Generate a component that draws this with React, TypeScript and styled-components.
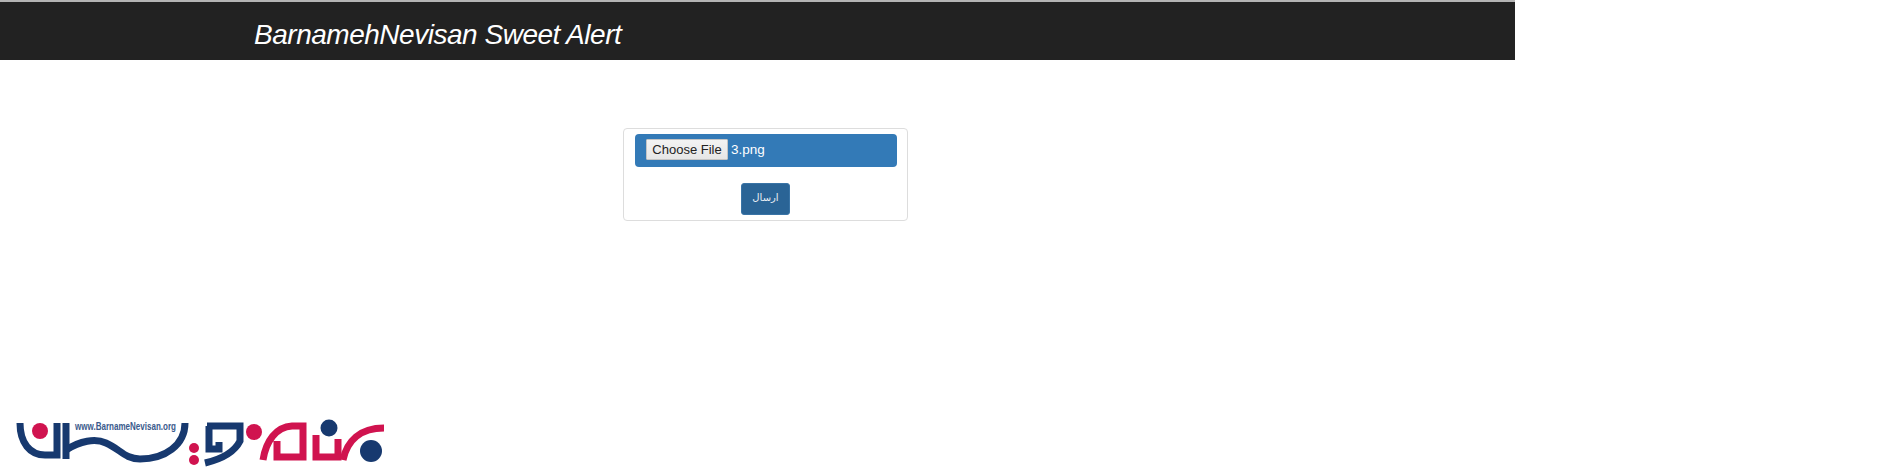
import React from 'react';
import styled, { createGlobalStyle } from 'styled-components';

const GlobalStyle = createGlobalStyle`
  html, body {
    margin: 0;
    padding: 0;
    background: #fff;
    font-family: 'Liberation Sans', Arial, sans-serif;
  }
`;

const Logo: React.FC = () => (
  <LogoSvg viewBox="0 0 400 63" width="400" height="63">
    <g fill="none" stroke="#17396f" strokeWidth="7">
      <path d="M20 18C20 38 30 50 45 50L57 50L57 18" />
      <path d="M66 18L66 54" />
      <path d="M66 45C80 36 95 33 106 38C120 44 125 54 140 54C165 54 185 40 185 18" />
      <path d="M207 21L240 21L240 36C235 46 222 54 205 58" />
      <path d="M209 21L209 44L219 44L219 37" />
    </g>
    <g fill="none" stroke="#d0134f" strokeWidth="7">
      <path d="M263 55C266 36 276 22 292 21L303 21L303 52L277 52L277 36" />
      <path d="M316 30L316 52L338 52L338 34" />
      <path d="M343 55C347 36 360 23 384 23" />
    </g>
    <circle cx="194" cy="43" r="5" fill="#d0134f" />
    <circle cx="194" cy="55" r="5" fill="#d0134f" />
    <circle cx="40" cy="26" r="8" fill="#d0134f" />
    <circle cx="254" cy="27" r="8" fill="#d0134f" />
    <circle cx="329" cy="23" r="8.5" fill="#17396f" />
    <circle cx="371" cy="46" r="11" fill="#17396f" />
    <LogoText x="75" y="25" textLength="101" lengthAdjust="spacingAndGlyphs">
      www.BarnameNevisan.org
    </LogoText>
  </LogoSvg>
);

const App: React.FC = () => {
  return (
    <Page>
      <GlobalStyle />
      <Navbar>
        <Brand>BarnamehNevisan Sweet Alert</Brand>
      </Navbar>
      <Main>
        <Card>
          <FileBar>
            <FileButton type="button">Choose File</FileButton>
            <FileName>3.png</FileName>
          </FileBar>
          <SubmitRow>
            <SubmitButton type="button">ارسال</SubmitButton>
          </SubmitRow>
        </Card>
      </Main>
      <Logo />
    </Page>
  );
};

const Page = styled.div`
  width: 1893px;
  height: 468px;
  overflow: hidden;
  background: #fff;
`;

const Navbar = styled.div`
  box-sizing: border-box;
  width: 1515px;
  height: 60px;
  padding: 8px 0 0 254px;
  display: flex;
  align-items: center;
  background: #222;
  border-top: 2px solid #b4b4b4;
`;

const Brand = styled.div`
  color: #fff;
  font-size: 28px;
  font-style: italic;
  letter-spacing: -0.48px;
  white-space: nowrap;
`;

const Main = styled.div`
  width: 1515px;
  padding-top: 68px;
  padding-left: 623px;
  box-sizing: border-box;
  height: 345px;
`;

const Card = styled.div`
  box-sizing: border-box;
  width: 285px;
  height: 93px;
  padding: 5px 10px 5px 11px;
  background: #fff;
  border: 1px solid #ddd;
  border-radius: 4px;
`;

const FileBar = styled.div`
  box-sizing: border-box;
  height: 33px;
  padding: 0 0 3px 11px;
  display: flex;
  align-items: center;
  gap: 3px;
  background: #337ab7;
  border-radius: 4px;
`;

const FileButton = styled.button`
  box-sizing: border-box;
  width: 82px;
  height: 21px;
  padding: 0;
  color: #222;
  font-family: 'Liberation Sans', Arial, sans-serif;
  font-size: 13px;
  background: linear-gradient(#f3f3f3, #e6e6e6);
  border: 1px solid #c4c4c4;
  border-radius: 1px;
`;

const FileName = styled.span`
  color: #fff;
  font-size: 13.5px;
`;

const SubmitRow = styled.div`
  display: flex;
  justify-content: center;
  padding: 16px 1px 0 0;
`;

const SubmitButton = styled.button`
  box-sizing: border-box;
  width: 49px;
  height: 32px;
  padding: 0 0 3px;
  color: #e8eef4;
  font-family: 'Liberation Sans', 'DejaVu Sans', sans-serif;
  font-size: 10px;
  background: #2a6496;
  border: 1px solid #3a74a6;
  border-radius: 3px;
`;

const LogoSvg = styled.svg`
  display: block;
`;

const LogoText = styled.text`
  fill: #3a5a8c;
  font-family: 'Liberation Sans', Arial, sans-serif;
  font-size: 10px;
  font-weight: 700;
`;

export default App;
